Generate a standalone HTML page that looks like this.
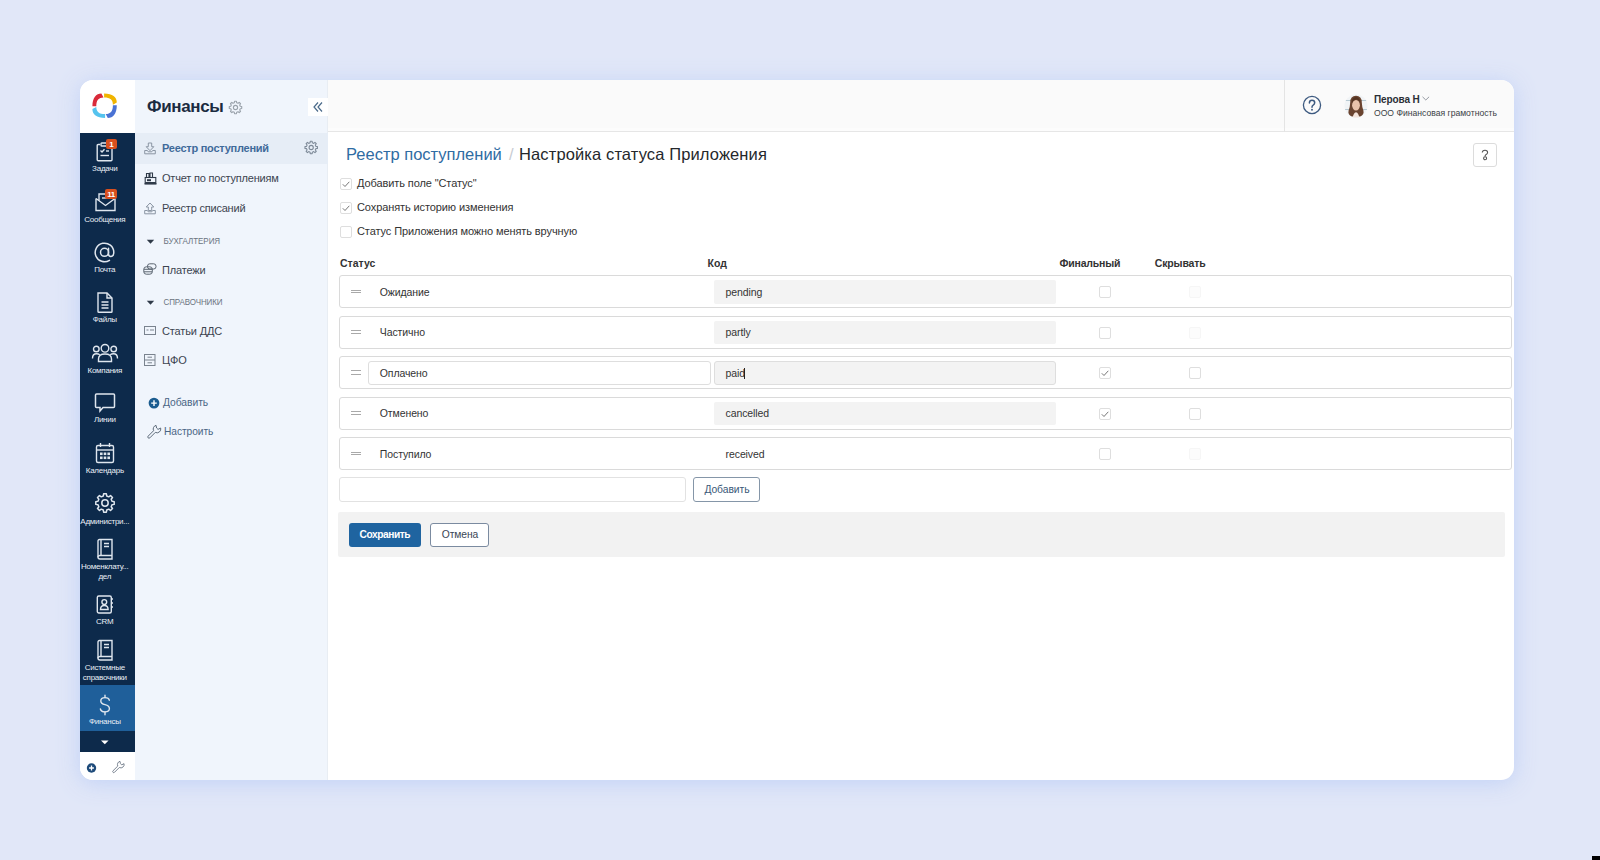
<!DOCTYPE html>
<html><head><meta charset="utf-8">
<style>
*{box-sizing:border-box;margin:0;padding:0}
html,body{width:1600px;height:860px;overflow:hidden}
body{background:#e1e7f8;font-family:"Liberation Sans",sans-serif;position:relative;color:#333}
.abs{position:absolute}
svg.abs{overflow:visible}
.t{position:absolute;white-space:nowrap;line-height:1}
#card{position:absolute;left:80px;top:80px;width:1434px;height:700px;border-radius:13px;background:#fff;overflow:hidden;box-shadow:0 3px 22px rgba(188,206,246,0.85)}
</style></head><body>
<div id="card">
  <div class="abs" style="left:0;top:0;width:55px;height:53px;background:#fff"></div>
  <div class="abs" style="left:0;top:53px;width:55px;height:619px;background:#0d2a4b"></div>
  <div class="abs" style="left:0;top:672px;width:55px;height:28px;background:#fff"></div>
  <div class="abs" style="left:55px;top:0;width:193px;height:700px;background:#f0f5fc"></div>
  <div class="abs" style="left:247px;top:0;width:1px;height:700px;background:#e8edf3"></div>
  <div class="abs" style="left:248px;top:0;width:1186px;height:48px;background:#fafafa"></div>
  <div class="abs" style="left:248px;top:48px;width:1186px;height:3px;background:#fcfcfc"></div>
  <div class="abs" style="left:248px;top:51px;width:1186px;height:1px;background:#e6e6e6"></div>
  <svg class="abs" style="left:10px;top:12px" width="30" height="30" viewBox="0 0 30 30">
    <g transform="translate(14.6 13.8)">
      <path id="lg" d="M-12.2 0.5 C-12.2 -8 -8.5 -12.2 -3.2 -12.2 L-1.1 -8.3 C-5.8 -8.3 -8.3 -5.6 -8.3 0.5 Z" fill="#d92a3a"/>
      <path d="M-12.2 0.5 C-12.2 -8 -8.5 -12.2 -3.2 -12.2 L-1.1 -8.3 C-5.8 -8.3 -8.3 -5.6 -8.3 0.5 Z" fill="#f0b400" transform="rotate(90)"/>
      <path d="M-12.2 0.5 C-12.2 -8 -8.5 -12.2 -3.2 -12.2 L-1.1 -8.3 C-5.8 -8.3 -8.3 -5.6 -8.3 0.5 Z" fill="#4a72d4" transform="rotate(180)"/>
      <path d="M-12.2 0.5 C-12.2 -8 -8.5 -12.2 -3.2 -12.2 L-1.1 -8.3 C-5.8 -8.3 -8.3 -5.6 -8.3 0.5 Z" fill="#55c3ee" transform="rotate(270)"/>
    </g>
  </svg>
</div>
<svg class="abs" style="left:95px;top:140px" width="20" height="23" viewBox="0 0 20 23"><g fill="none" stroke="#dfe6ee" stroke-width="1.4">
<path d="M5 4.5 H3.2 Q2.2 4.5 2.2 5.5 V19.8 Q2.2 20.8 3.2 20.8 H16 Q17 20.8 17 19.8 V5.5 Q17 4.5 16 4.5 H14"/>
<rect x="6" y="3" width="7" height="3" rx="0.8"/>
<path d="M5.5 10.5 L7 12 L9.5 9.2"/><path d="M11 11 H14"/><path d="M5.5 15.5 H14"/></g></svg>
<div class="abs" style="left:106px;top:139px;width:11px;height:10px;background:#d9501e;border-radius:2px"></div>
<div class="t" style="left:106.00px;top:140.53px;font-size:8px;color:#fff;font-weight:700;letter-spacing:0px;width:11px;text-align:center">1</div>
<div class="t" style="left:64.8px;width:80px;text-align:center;top:165.43px;font-size:8px;color:#e9eef5;letter-spacing:-0.25px">Задачи</div>
<svg class="abs" style="left:94px;top:188px" width="23" height="25" viewBox="0 0 23 25"><g fill="none" stroke="#dfe6ee" stroke-width="1.4">
<path d="M2 10.5 V22.5 H21 V10.5"/><path d="M2 10.5 L11.5 17.5 L21 10.5"/>
<path d="M5 12.5 V6 H13"/><path d="M8 10 H14"/></g></svg>
<div class="abs" style="left:105px;top:189px;width:12px;height:10px;background:#d9501e;border-radius:2px"></div>
<div class="t" style="left:105.00px;top:190.53px;font-size:8px;color:#fff;font-weight:700;letter-spacing:-0.5px;width:12px;text-align:center">11</div>
<div class="t" style="left:64.8px;width:80px;text-align:center;top:216.03px;font-size:8px;color:#e9eef5;letter-spacing:-0.25px">Сообщения</div>
<svg class="abs" style="left:94px;top:242px" width="22" height="21" viewBox="0 0 22 21"><g fill="none" stroke="#dfe6ee" stroke-width="1.5" stroke-linecap="round"><circle cx="10.5" cy="10.3" r="4"/><path d="M14.5 6.3 V12 Q14.5 14.4 16.8 14.4 Q19.8 14.4 19.8 10.3 A9.3 9.3 0 1 0 15.5 18.3"/></g></svg>
<div class="t" style="left:64.8px;width:80px;text-align:center;top:265.83px;font-size:8px;color:#e9eef5;letter-spacing:-0.25px">Почта</div>
<svg class="abs" style="left:95px;top:291px" width="20" height="23" viewBox="0 0 20 23"><g fill="none" stroke="#dfe6ee" stroke-width="1.4">
<path d="M3 2 H12 L17 7 V20.5 Q17 21.3 16.2 21.3 H3.8 Q3 21.3 3 20.5 Z"/><path d="M12 2 V7 H17"/>
<path d="M6.5 11 H13.5 M6.5 14 H13.5 M6.5 17 H13.5"/></g></svg>
<div class="t" style="left:64.8px;width:80px;text-align:center;top:316.03px;font-size:8px;color:#e9eef5;letter-spacing:-0.25px">Файлы</div>
<svg class="abs" style="left:91px;top:343px" width="28" height="20" viewBox="0 0 28 20"><g fill="none" stroke="#dfe6ee" stroke-width="1.4">
<circle cx="14" cy="5.3" r="3.8"/><circle cx="5.3" cy="6" r="2.8"/><circle cx="22.7" cy="6" r="2.8"/>
<path d="M7.5 18.5 V16 Q7.5 11 14 11 Q20.5 11 20.5 16 V18.5 Z"/>
<path d="M1.5 15.5 Q1.5 10.8 5.5 10.8 Q7.5 10.8 8.8 11.8"/><path d="M26.5 15.5 Q26.5 10.8 22.5 10.8 Q20.5 10.8 19.2 11.8"/></g></svg>
<div class="t" style="left:64.8px;width:80px;text-align:center;top:366.73px;font-size:8px;color:#e9eef5;letter-spacing:-0.25px">Компания</div>
<svg class="abs" style="left:94px;top:392px" width="22" height="22" viewBox="0 0 22 22"><g fill="none" stroke="#dfe6ee" stroke-width="1.5">
<path d="M2.5 2 H19.5 Q20.5 2 20.5 3 V14.5 Q20.5 15.5 19.5 15.5 H9 L6 19 V15.5 H2.5 Q1.5 15.5 1.5 14.5 V3 Q1.5 2 2.5 2 Z"/></g></svg>
<div class="t" style="left:64.8px;width:80px;text-align:center;top:416.23px;font-size:8px;color:#e9eef5;letter-spacing:-0.25px">Линии</div>
<svg class="abs" style="left:94px;top:441px" width="22" height="24" viewBox="0 0 22 24"><g fill="none" stroke="#dfe6ee" stroke-width="1.4">
<rect x="2.5" y="4.5" width="17" height="17" rx="1.5"/><path d="M2.5 9 H19.5"/><path d="M6.5 2 V6 M15.5 2 V6"/></g>
<g fill="#dfe6ee"><rect x="6" y="11.5" width="2.6" height="2.6"/><rect x="9.7" y="11.5" width="2.6" height="2.6"/><rect x="13.4" y="11.5" width="2.6" height="2.6"/>
<rect x="6" y="15.5" width="2.6" height="2.6"/><rect x="9.7" y="15.5" width="2.6" height="2.6"/><rect x="13.4" y="15.5" width="2.6" height="2.6"/></g></svg>
<div class="t" style="left:64.8px;width:80px;text-align:center;top:466.73px;font-size:8px;color:#e9eef5;letter-spacing:-0.25px">Календарь</div>
<svg class="abs" style="left:93px;top:491px" width="24" height="24" viewBox="0 0 24 24"><g fill="none" stroke="#dfe6ee" stroke-width="1.5" stroke-linejoin="round"><path d="M18.99 10.26 L21.20 10.62 L21.20 13.38 L18.99 13.74 L18.17 15.71 L19.48 17.53 L17.53 19.48 L15.71 18.17 L13.74 18.99 L13.38 21.20 L10.62 21.20 L10.26 18.99 L8.29 18.17 L6.47 19.48 L4.52 17.53 L5.83 15.71 L5.01 13.74 L2.80 13.38 L2.80 10.62 L5.01 10.26 L5.83 8.29 L4.52 6.47 L6.47 4.52 L8.29 5.83 L10.26 5.01 L10.62 2.80 L13.38 2.80 L13.74 5.01 L15.71 5.83 L17.53 4.52 L19.48 6.47 L18.17 8.29 Z"/><circle cx="12" cy="12" r="3.2"/></g></svg>
<div class="t" style="left:64.8px;width:80px;text-align:center;top:518.03px;font-size:8px;color:#e9eef5;letter-spacing:-0.25px">Администри...</div>
<svg class="abs" style="left:95px;top:538px" width="20" height="22" viewBox="0 0 20 22"><g fill="none" stroke="#dfe6ee" stroke-width="1.4">
<path d="M3 3 Q3 1.5 4.5 1.5 H17 V17.5 H5 Q3 17.5 3 19.3 Q3 21 5 21 H17 V17.5"/><path d="M3 19.3 V3"/>
<path d="M6 1.5 V17.5"/><path d="M9 5.5 H14 M9 8.5 H14"/></g></svg>
<div class="t" style="left:64.8px;width:80px;text-align:center;top:563.03px;font-size:8px;color:#e9eef5;letter-spacing:-0.25px">Номенклату...</div>
<div class="t" style="left:64.8px;width:80px;text-align:center;top:572.73px;font-size:8px;color:#e9eef5;letter-spacing:-0.25px">дел</div>
<svg class="abs" style="left:95px;top:594px" width="20" height="21" viewBox="0 0 20 21"><g fill="none" stroke="#dfe6ee" stroke-width="1.4">
<rect x="2.3" y="2" width="14" height="17" rx="1.5"/><circle cx="9.3" cy="8" r="2.4"/><path d="M5.5 15.5 Q5.5 11.5 9.3 11.5 Q13.1 11.5 13.1 15.5 Z"/>
<path d="M16.3 5 H18 M16.3 9 H18 M16.3 13 H18"/></g></svg>
<div class="t" style="left:64.8px;width:80px;text-align:center;top:617.93px;font-size:8px;color:#e9eef5;letter-spacing:-0.25px">CRM</div>
<svg class="abs" style="left:95px;top:639px" width="20" height="22" viewBox="0 0 20 22"><g fill="none" stroke="#dfe6ee" stroke-width="1.4">
<path d="M3 3 Q3 1.5 4.5 1.5 H17 V17.5 H5 Q3 17.5 3 19.3 Q3 21 5 21 H17 V17.5"/><path d="M3 19.3 V3"/>
<path d="M6 1.5 V17.5"/><path d="M9 5.5 H14 M9 8.5 H14"/></g></svg>
<div class="t" style="left:64.8px;width:80px;text-align:center;top:664.33px;font-size:8px;color:#e9eef5;letter-spacing:-0.25px">Системные</div>
<div class="t" style="left:64.8px;width:80px;text-align:center;top:673.63px;font-size:8px;color:#e9eef5;letter-spacing:-0.25px">справочники</div>
<div class="abs" style="left:80px;top:685px;width:55px;height:46px;background:#1f5f9a"></div>
<svg class="abs" style="left:99px;top:694px" width="12" height="22" viewBox="0 0 12 22"><g fill="none" stroke="#dfe6ee" stroke-width="1.4" stroke-linecap="round"><path d="M6 1.2 V3.6 M6 17.9 V20.8"/><path d="M10.3 6.2 Q9.8 3.6 6 3.6 Q1.8 3.6 1.8 6.9 Q1.8 9.6 6 10.6 Q10.4 11.6 10.4 14.5 Q10.4 17.9 6 17.9 Q2 17.9 1.4 15"/></g></svg>
<div class="t" style="left:64.8px;width:80px;text-align:center;top:718.03px;font-size:8px;color:#e9eef5;letter-spacing:-0.25px">Финансы</div>
<svg class="abs" style="left:100px;top:740px" width="10" height="5" viewBox="0 0 10 5"><path d="M1 0.5 H8.6 L4.8 4.2 Z" fill="#fff"/></svg>
<svg class="abs" style="left:85px;top:762px" width="13" height="13" viewBox="0 0 13 13"><circle cx="6.5" cy="6" r="4.7" fill="#1e4b7a"/><path d="M6.5 3.6 V8.4 M4.1 6 H8.9" stroke="#fff" stroke-width="1.3"/></svg>
<svg class="abs" style="left:112px;top:761px" width="14" height="14" viewBox="0 0 14 14"><g transform="scale(0.88)" fill="none" stroke="#6b7785" stroke-width="1.02" stroke-linejoin="round">
<path d="M1.15 11.15 L6.6 5.7 A3.8 3.8 0 0 1 9.02 0.33 L9.6 3.0 L11 4.4 L13.67 3.02 A3.8 3.8 0 0 1 8.3 7.4 L2.85 12.85 A1.2 1.2 0 0 1 1.15 11.15 Z"/></g></svg>
<div class="t" style="left:147.00px;top:97.81px;font-size:17px;color:#1b2b40;font-weight:700;letter-spacing:-0.35px;">Финансы</div>
<svg class="abs" style="left:228px;top:100px" width="15" height="15" viewBox="0 0 15 15"><g fill="none" stroke="#9aa2ab" stroke-width="1.1" stroke-linejoin="round"><path d="M12.26 6.32 L13.73 6.56 L13.73 8.44 L12.26 8.68 L11.70 10.03 L12.57 11.24 L11.24 12.57 L10.03 11.70 L8.68 12.26 L8.44 13.73 L6.56 13.73 L6.32 12.26 L4.97 11.70 L3.76 12.57 L2.43 11.24 L3.30 10.03 L2.74 8.68 L1.27 8.44 L1.27 6.56 L2.74 6.32 L3.30 4.97 L2.43 3.76 L3.76 2.43 L4.97 3.30 L6.32 2.74 L6.56 1.27 L8.44 1.27 L8.68 2.74 L10.03 3.30 L11.24 2.43 L12.57 3.76 L11.70 4.97 Z"/><circle cx="7.5" cy="7.5" r="2.1"/></g></svg>
<div class="abs" style="left:308px;top:98px;width:20px;height:18px;background:#fff"></div>
<svg class="abs" style="left:312px;top:101px" width="12" height="12" viewBox="0 0 12 12"><g fill="none" stroke="#4a6a8a" stroke-width="1.2"><path d="M6 1.5 L2 6 L6 10.5"/><path d="M10 1.5 L6 6 L10 10.5"/></g></svg>
<div class="abs" style="left:135px;top:133px;width:193px;height:31px;background:#e6edf6"></div>
<svg class="abs" style="left:144px;top:142px" width="13" height="13" viewBox="0 0 13 13"><g fill="none" stroke="#8a95a3" stroke-width="1" stroke-linejoin="round">
<path d="M4.3 1 V4.7 H2.2 L6 8.7 L9.8 4.7 H7.7 V1 Z"/><path d="M0.7 8.5 V11.8 H11.3 V8.5 H8.6 L7.8 9.8 H4.2 L3.4 8.5 Z"/></g></svg>
<div class="t" style="left:162.00px;top:143.49px;font-size:11px;color:#3f6a9a;font-weight:700;letter-spacing:-0.25px;">Реестр поступлений</div>
<svg class="abs" style="left:304px;top:140px" width="15" height="15" viewBox="0 0 15 15"><g fill="none" stroke="#7e8a98" stroke-width="1.1" stroke-linejoin="round"><path d="M11.86 6.34 L13.43 6.56 L13.43 8.44 L11.86 8.66 L11.31 9.98 L12.27 11.24 L10.94 12.57 L9.68 11.61 L8.36 12.16 L8.14 13.73 L6.26 13.73 L6.04 12.16 L4.72 11.61 L3.46 12.57 L2.13 11.24 L3.09 9.98 L2.54 8.66 L0.97 8.44 L0.97 6.56 L2.54 6.34 L3.09 5.02 L2.13 3.76 L3.46 2.43 L4.72 3.39 L6.04 2.84 L6.26 1.27 L8.14 1.27 L8.36 2.84 L9.68 3.39 L10.94 2.43 L12.27 3.76 L11.31 5.02 Z"/><circle cx="7.2" cy="7.5" r="2.1"/></g></svg>
<svg class="abs" style="left:144px;top:172px" width="13" height="13" viewBox="0 0 13 13"><g fill="none" stroke="#2f3a48" stroke-width="1.1"><rect x="1.2" y="5.5" width="10.6" height="6.3"/><path d="M0.5 11.8 H12.5"/><path d="M2.5 5.5 V1.5 H5 V5.5 M6 5.5 V1 H8.5 V5.5"/></g>
<rect x="3" y="7.2" width="4" height="2" fill="#2f3a48"/><rect x="1.2" y="10" width="10.6" height="1.8" fill="#2f3a48"/></svg>
<div class="t" style="left:162.00px;top:173.29px;font-size:11px;color:#3c4450;font-weight:400;letter-spacing:-0.2px;">Отчет по поступлениям</div>
<svg class="abs" style="left:144px;top:202px" width="13" height="13" viewBox="0 0 13 13"><g fill="none" stroke="#8a95a3" stroke-width="1" stroke-linejoin="round">
<path d="M6 1 L2.2 5 H4.3 V8.5 H7.7 V5 H9.8 Z"/><path d="M0.7 8.5 V11.8 H11.3 V8.5 H8.6 L7.8 9.8 H4.2 L3.4 8.5 Z"/></g></svg>
<div class="t" style="left:162.00px;top:203.29px;font-size:11px;color:#3c4450;font-weight:400;letter-spacing:-0.2px;">Реестр списаний</div>
<svg class="abs" style="left:146px;top:239px" width="9" height="6" viewBox="0 0 9 6"><path d="M0.8 0.8 H8.2 L4.5 4.8 Z" fill="#2f3a48"/></svg>
<div class="t" style="left:163.50px;top:238.23px;font-size:8px;color:#6b7480;font-weight:400;letter-spacing:-0.05px;transform:scaleY(1.2);transform-origin:0 85%">БУХГАЛТЕРИЯ</div>
<svg class="abs" style="left:143px;top:263px" width="14" height="12" viewBox="0 0 14 12"><g fill="none" stroke="#5a6470" stroke-width="1"><rect x="4.5" y="0.8" width="8.5" height="5.2" rx="2.3"/><rect x="0.8" y="3.8" width="8.5" height="7.4" rx="2.5"/><path d="M0.8 6.3 H9.3 M0.8 8.8 H9.3"/></g></svg>
<div class="t" style="left:162.00px;top:264.89px;font-size:11px;color:#3c4450;font-weight:400;letter-spacing:-0.15px;">Платежи</div>
<svg class="abs" style="left:146px;top:300px" width="9" height="6" viewBox="0 0 9 6"><path d="M0.8 0.8 H8.2 L4.5 4.8 Z" fill="#2f3a48"/></svg>
<div class="t" style="left:163.50px;top:298.93px;font-size:8px;color:#6b7480;font-weight:400;letter-spacing:-0.1px;transform:scaleY(1.2);transform-origin:0 85%">СПРАВОЧНИКИ</div>
<svg class="abs" style="left:143px;top:325px" width="14" height="11" viewBox="0 0 14 11"><g fill="none" stroke="#7a838e" stroke-width="1"><rect x="1.5" y="1.5" width="11" height="8" /></g><path d="M3.5 5 H5.5 M7 5 H11" stroke="#7a838e" stroke-width="1"/></svg>
<div class="t" style="left:162.00px;top:325.89px;font-size:11px;color:#3c4450;font-weight:400;letter-spacing:-0.15px;">Статьи ДДС</div>
<svg class="abs" style="left:143px;top:353px" width="14" height="14" viewBox="0 0 14 14"><g fill="none" stroke="#7a838e" stroke-width="1"><rect x="1.5" y="1.5" width="10.5" height="11" /><path d="M1.5 7 H12"/><path d="M4.5 4.2 H9 M4.5 9.8 H9"/></g></svg>
<div class="t" style="left:162.00px;top:355.19px;font-size:11px;color:#3c4450;font-weight:400;letter-spacing:-0.1px;">ЦФО</div>
<svg class="abs" style="left:148px;top:397px" width="13" height="13" viewBox="0 0 13 13"><circle cx="6" cy="6.1" r="5.4" fill="#1b5c8f"/><path d="M6 3.3 V8.9 M3.2 6.1 H8.8" stroke="#fff" stroke-width="1.4"/></svg>
<div class="t" style="left:163.00px;top:398.08px;font-size:10.3px;color:#4a6584;font-weight:400;letter-spacing:-0.05px;">Добавить</div>
<svg class="abs" style="left:147px;top:424.5px" width="16" height="16" viewBox="0 0 16 16"><g transform="scale(1.0)" fill="none" stroke="#5d6b7a" stroke-width="1.00" stroke-linejoin="round">
<path d="M1.15 11.15 L6.6 5.7 A3.8 3.8 0 0 1 9.02 0.33 L9.6 3.0 L11 4.4 L13.67 3.02 A3.8 3.8 0 0 1 8.3 7.4 L2.85 12.85 A1.2 1.2 0 0 1 1.15 11.15 Z"/></g></svg>
<div class="t" style="left:164.00px;top:426.67px;font-size:10.2px;color:#4a6584;font-weight:400;letter-spacing:-0.05px;">Настроить</div>
<div class="abs" style="left:1284px;top:80px;width:1px;height:52px;background:#e4e4e4"></div>
<svg class="abs" style="left:1302px;top:95px" width="20" height="20" viewBox="0 0 20 20"><circle cx="10" cy="10" r="8.6" fill="none" stroke="#3d5a80" stroke-width="1.3"/></svg>
<svg class="abs" style="left:1302px;top:95px" width="20" height="20" viewBox="0 0 20 20"><g fill="none" stroke="#3d5a80" stroke-width="1.5" stroke-linecap="round"><path d="M7.4 8 Q7.4 5.3 10 5.3 Q12.7 5.3 12.7 7.8 Q12.7 9.4 10.9 10.3 Q10 10.8 10 12.2"/></g><circle cx="10" cy="14.7" r="0.95" fill="#3d5a80"/></svg>
<svg class="abs" style="left:1344px;top:94px" width="24" height="24" viewBox="0 0 24 24"><defs><clipPath id="av"><circle cx="12" cy="12" r="11.5"/></clipPath></defs>
<g clip-path="url(#av)"><rect width="24" height="24" fill="#f1f4f6"/>
<path d="M0 6.5 H24 M0 15.5 H24" stroke="#b7cad3" stroke-width="1.2"/>
<path d="M12 1.8 Q6.3 1.8 6.2 8.5 Q6 13 4.6 16.5 Q3.8 19 5.5 21 L7.5 22.5 H16.5 L18.5 21 Q20.2 19 19.4 16.5 Q18 13 17.8 8.5 Q17.7 1.8 12 1.8 Z" fill="#6a4430"/>
<ellipse cx="12" cy="11.2" rx="3.9" ry="5.3" fill="#e9c2aa"/>
<path d="M8.5 24 Q9.5 18.8 12 18.3 Q14.5 18.8 15.5 24 Z" fill="#f4e4dc"/>
<path d="M12 3 Q7.6 3.2 7.8 9.2 Q9.2 5.8 12.3 5.2 Q15.2 5.8 16.3 9.3 Q16.4 3.2 12 3 Z" fill="#553422"/></g></svg>
<div class="t" style="left:1374.00px;top:94.53px;font-size:10px;color:#2a2f36;font-weight:700;letter-spacing:-0.1px;">Перова Н</div>
<svg class="abs" style="left:1421px;top:95px" width="10" height="7" viewBox="0 0 10 7"><path d="M1.5 1.8 L4.8 5 L8.1 1.8" fill="none" stroke="#8a9099" stroke-width="0.9"/></svg>
<div class="t" style="left:1374.00px;top:108.52px;font-size:8.6px;color:#3a3f46;font-weight:400;letter-spacing:0px;">ООО Финансовая грамотность</div>
<div class="t" style="left:346.00px;top:146.23px;font-size:16.5px;color:#2f6ca3;font-weight:400;letter-spacing:0px;">Реестр поступлений</div>
<div class="t" style="left:509.00px;top:146.23px;font-size:16.5px;color:#c8ccd2;font-weight:400;letter-spacing:0px;">/</div>
<div class="t" style="left:519.00px;top:146.23px;font-size:16.5px;color:#25282c;font-weight:400;letter-spacing:0.12px;">Настройка статуса Приложения</div>
<div class="abs" style="left:1473px;top:143px;width:24px;height:24px;border:1px solid #dcdcdc;border-radius:3px;background:#fff"></div>
<svg class="abs" style="left:1479px;top:148px" width="12" height="13" viewBox="0 0 12 13"><g fill="none" stroke="#555" stroke-width="1.1"><path d="M3.3 4.6 Q3.3 2.2 6 2.2 Q8.6 2.2 8.6 4.4 Q8.6 5.8 6.8 6.7 Q6 7.2 6.1 8.4"/><circle cx="6.1" cy="10.3" r="1.5"/></g></svg>
<div class="abs" style="left:340px;top:177.5px;width:12px;height:12px;border:1px solid #dedede;border-radius:2px;background:#fff"></div>
<svg class="abs" style="left:340px;top:177.5px" width="12" height="12" viewBox="0 0 12 12"><path d="M2.8 6.3 L5 8.5 L9.3 3.8" fill="none" stroke="#666" stroke-width="0.9"/></svg>
<div class="t" style="left:357.00px;top:177.69px;font-size:11px;color:#333;font-weight:400;letter-spacing:-0.1px;">Добавить поле "Статус"</div>
<div class="abs" style="left:340px;top:201.5px;width:12px;height:12px;border:1px solid #dedede;border-radius:2px;background:#fff"></div>
<svg class="abs" style="left:340px;top:201.5px" width="12" height="12" viewBox="0 0 12 12"><path d="M2.8 6.3 L5 8.5 L9.3 3.8" fill="none" stroke="#666" stroke-width="0.9"/></svg>
<div class="t" style="left:357.00px;top:201.69px;font-size:11px;color:#333;font-weight:400;letter-spacing:-0.1px;">Сохранять историю изменения</div>
<div class="abs" style="left:340px;top:225.5px;width:12px;height:12px;border:1px solid #dedede;border-radius:2px;background:#fff"></div>
<div class="t" style="left:357.00px;top:225.69px;font-size:11px;color:#333;font-weight:400;letter-spacing:-0.1px;">Статус Приложения можно менять вручную</div>
<div class="t" style="left:340.00px;top:257.91px;font-size:10.5px;color:#333;font-weight:700;letter-spacing:0px;">Статус</div>
<div class="t" style="left:707.50px;top:257.91px;font-size:10.5px;color:#333;font-weight:700;letter-spacing:0px;">Код</div>
<div class="t" style="left:1059.50px;top:257.91px;font-size:10.5px;color:#333;font-weight:700;letter-spacing:-0.2px;">Финальный</div>
<div class="t" style="left:1154.80px;top:257.91px;font-size:10.5px;color:#333;font-weight:700;letter-spacing:-0.15px;">Скрывать</div>
<div class="abs" style="left:339px;top:275px;width:1173px;height:33px;border:1px solid #dadada;border-radius:3px;background:#fff"></div>
<div class="abs" style="left:351px;top:290px;width:10px;height:1px;background:#a9a9a9"></div>
<div class="abs" style="left:351px;top:292px;width:10px;height:1px;background:#a9a9a9"></div>
<div class="abs" style="left:714px;top:280px;width:342px;height:23.5px;background:#f3f3f3;border-radius:2px"></div>
<div class="t" style="left:379.80px;top:286.91px;font-size:10.5px;color:#333;font-weight:400;letter-spacing:-0.1px;">Ожидание</div>
<div class="t" style="left:725.60px;top:286.91px;font-size:10.5px;color:#333;font-weight:400;letter-spacing:-0.1px;">pending</div>
<div class="abs" style="left:1099px;top:286px;width:12px;height:12px;border:1px solid #dedede;border-radius:2px;background:#fff"></div>
<div class="abs" style="left:1189px;top:286px;width:12px;height:12px;border:1px solid #f6f6f6;border-radius:2px;background:#fcfcfc"></div>
<div class="abs" style="left:339px;top:315.5px;width:1173px;height:33px;border:1px solid #dadada;border-radius:3px;background:#fff"></div>
<div class="abs" style="left:351px;top:330px;width:10px;height:1px;background:#a9a9a9"></div>
<div class="abs" style="left:351px;top:333px;width:10px;height:1px;background:#a9a9a9"></div>
<div class="abs" style="left:714px;top:320.5px;width:342px;height:23.5px;background:#f3f3f3;border-radius:2px"></div>
<div class="t" style="left:379.80px;top:327.41px;font-size:10.5px;color:#333;font-weight:400;letter-spacing:-0.1px;">Частично</div>
<div class="t" style="left:725.60px;top:327.41px;font-size:10.5px;color:#333;font-weight:400;letter-spacing:-0.1px;">partly</div>
<div class="abs" style="left:1099px;top:326.5px;width:12px;height:12px;border:1px solid #dedede;border-radius:2px;background:#fff"></div>
<div class="abs" style="left:1189px;top:326.5px;width:12px;height:12px;border:1px solid #f6f6f6;border-radius:2px;background:#fcfcfc"></div>
<div class="abs" style="left:339px;top:356px;width:1173px;height:33px;border:1px solid #dadada;border-radius:3px;background:#fff"></div>
<div class="abs" style="left:351px;top:370px;width:10px;height:1px;background:#a9a9a9"></div>
<div class="abs" style="left:351px;top:374px;width:10px;height:1px;background:#a9a9a9"></div>
<div class="abs" style="left:368px;top:361px;width:343px;height:24px;border:1px solid #dedede;border-radius:3px;background:#fff"></div>
<div class="abs" style="left:714px;top:361px;width:342px;height:24px;border:1px solid #dedede;border-radius:3px;background:#f3f3f3"></div>
<div class="t" style="left:379.80px;top:367.91px;font-size:10.5px;color:#333;font-weight:400;letter-spacing:-0.1px;">Оплачено</div>
<div class="t" style="left:725.60px;top:367.91px;font-size:10.5px;color:#333;font-weight:400;letter-spacing:-0.1px;">paid</div>
<div class="abs" style="left:744px;top:368px;width:1px;height:11px;background:#222"></div>
<div class="abs" style="left:1099px;top:367px;width:12px;height:12px;border:1px solid #dedede;border-radius:2px;background:#fff"></div>
<svg class="abs" style="left:1099px;top:367px" width="12" height="12" viewBox="0 0 12 12"><path d="M2.8 6.3 L5 8.5 L9.3 3.8" fill="none" stroke="#666" stroke-width="0.9"/></svg>
<div class="abs" style="left:1189px;top:367px;width:12px;height:12px;border:1px solid #dedede;border-radius:2px;background:#fff"></div>
<div class="abs" style="left:339px;top:396.5px;width:1173px;height:33px;border:1px solid #dadada;border-radius:3px;background:#fff"></div>
<div class="abs" style="left:351px;top:411px;width:10px;height:1px;background:#a9a9a9"></div>
<div class="abs" style="left:351px;top:414px;width:10px;height:1px;background:#a9a9a9"></div>
<div class="abs" style="left:714px;top:401.5px;width:342px;height:23.5px;background:#f3f3f3;border-radius:2px"></div>
<div class="t" style="left:379.80px;top:408.41px;font-size:10.5px;color:#333;font-weight:400;letter-spacing:-0.1px;">Отменено</div>
<div class="t" style="left:725.60px;top:408.41px;font-size:10.5px;color:#333;font-weight:400;letter-spacing:-0.1px;">cancelled</div>
<div class="abs" style="left:1099px;top:407.5px;width:12px;height:12px;border:1px solid #dedede;border-radius:2px;background:#fff"></div>
<svg class="abs" style="left:1099px;top:407.5px" width="12" height="12" viewBox="0 0 12 12"><path d="M2.8 6.3 L5 8.5 L9.3 3.8" fill="none" stroke="#666" stroke-width="0.9"/></svg>
<div class="abs" style="left:1189px;top:407.5px;width:12px;height:12px;border:1px solid #dedede;border-radius:2px;background:#fff"></div>
<div class="abs" style="left:339px;top:437px;width:1173px;height:33px;border:1px solid #dadada;border-radius:3px;background:#fff"></div>
<div class="abs" style="left:351px;top:452px;width:10px;height:1px;background:#a9a9a9"></div>
<div class="abs" style="left:351px;top:454px;width:10px;height:1px;background:#a9a9a9"></div>
<div class="t" style="left:379.80px;top:448.91px;font-size:10.5px;color:#333;font-weight:400;letter-spacing:-0.1px;">Поступило</div>
<div class="t" style="left:725.60px;top:448.91px;font-size:10.5px;color:#333;font-weight:400;letter-spacing:-0.1px;">received</div>
<div class="abs" style="left:1099px;top:448px;width:12px;height:12px;border:1px solid #dedede;border-radius:2px;background:#fff"></div>
<div class="abs" style="left:1189px;top:448px;width:12px;height:12px;border:1px solid #f6f6f6;border-radius:2px;background:#fcfcfc"></div>
<div class="abs" style="left:339px;top:477px;width:347px;height:25px;border:1px solid #e2e2e2;border-radius:3px;background:#fff"></div>
<div class="abs" style="left:693px;top:477px;width:67px;height:25px;border:1.3px solid #8596a8;border-radius:3px;background:#fff"></div>
<div class="t" style="left:704.40px;top:485.28px;font-size:10.3px;color:#3a5878;font-weight:400;letter-spacing:-0.05px;">Добавить</div>
<div class="abs" style="left:338px;top:512px;width:1167px;height:45px;background:#f2f2f2;border-radius:2px"></div>
<div class="abs" style="left:349px;top:523px;width:72px;height:24px;background:#1f64a0;border-radius:3px"></div>
<div class="t" style="left:359.60px;top:530.12px;font-size:10.2px;color:#fff;font-weight:700;letter-spacing:-0.45px;">Сохранить</div>
<div class="abs" style="left:430px;top:523px;width:59px;height:24px;border:1.2px solid #7b8ba0;border-radius:3px;background:#fff"></div>
<div class="t" style="left:441.75px;top:530.03px;font-size:10.3px;color:#3a4656;font-weight:400;letter-spacing:-0.1px;">Отмена</div>

<div class="abs" style="left:1592px;top:856px;width:8px;height:4px;background:#000"></div>
</body></html>
